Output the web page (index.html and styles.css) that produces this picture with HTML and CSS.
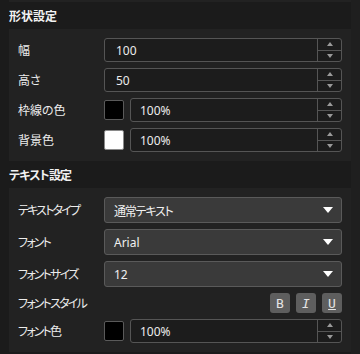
FILE: index.html
```html
<!DOCTYPE html>
<html lang="ja">
<head>
<meta charset="utf-8">
<link rel="stylesheet" href="styles.css">
</head>
<body>
<div class="panel">
  <div class="scroll">
    <div class="prev-end"></div>
    <section class="section">
      <h2 class="sec-title">形状設定</h2>
      <div class="card">
        <div class="row">
          <span class="label">幅</span>
          <div class="num">
            <span class="num-value">100</span>
            <span class="spin"><span class="spin-up"><i class="tri-up"></i></span><span class="spin-down"><i class="tri-down"></i></span></span>
          </div>
        </div>
        <div class="row">
          <span class="label">高さ</span>
          <div class="num">
            <span class="num-value">50</span>
            <span class="spin"><span class="spin-up"><i class="tri-up"></i></span><span class="spin-down"><i class="tri-down"></i></span></span>
          </div>
        </div>
        <div class="row">
          <span class="label">枠線の色</span>
          <div class="color-ctl">
            <span class="swatch swatch-black"></span>
            <div class="num num-pct">
              <span class="num-value">100%</span>
              <span class="spin"><span class="spin-up"><i class="tri-up"></i></span><span class="spin-down"><i class="tri-down"></i></span></span>
            </div>
          </div>
        </div>
        <div class="row">
          <span class="label">背景色</span>
          <div class="color-ctl">
            <span class="swatch swatch-white"></span>
            <div class="num num-pct">
              <span class="num-value">100%</span>
              <span class="spin"><span class="spin-up"><i class="tri-up"></i></span><span class="spin-down"><i class="tri-down"></i></span></span>
            </div>
          </div>
        </div>
      </div>
    </section>
    <section class="section">
      <h2 class="sec-title kana-title">テキスト設定</h2>
      <div class="card">
        <div class="row row-select">
          <span class="label kana">テキストタイプ</span>
          <div class="select"><span class="select-value kana-value">通常テキスト</span><i class="caret"></i></div>
        </div>
        <div class="row row-select">
          <span class="label kana">フォント</span>
          <div class="select"><span class="select-value latin">Arial</span><i class="caret"></i></div>
        </div>
        <div class="row row-select">
          <span class="label kana">フォントサイズ</span>
          <div class="select"><span class="select-value latin">12</span><i class="caret"></i></div>
        </div>
        <div class="row row-style">
          <span class="label kana">フォントスタイル</span>
          <div class="style-btns">
            <span class="sbtn sbtn-b">B</span>
            <span class="sbtn sbtn-i">I</span>
            <span class="sbtn sbtn-u">U</span>
          </div>
        </div>
        <div class="row">
          <span class="label kana">フォント色</span>
          <div class="color-ctl">
            <span class="swatch swatch-black"></span>
            <div class="num num-pct">
              <span class="num-value">100%</span>
              <span class="spin"><span class="spin-up"><i class="tri-up"></i></span><span class="spin-down"><i class="tri-down"></i></span></span>
            </div>
          </div>
        </div>
      </div>
    </section>
  </div>
  <div class="scrollbar"></div>
</div>
</body>
</html>
```
FILE: styles.css
```css
* { box-sizing: border-box; }
html, body { margin: 0; padding: 0; }
body {
  background: #1b1b1b;
  font-family: "Noto Sans CJK JP", "Noto Sans", sans-serif;
  font-feature-settings: "palt";
  color: #e6e6e6;
}
.panel {
  width: 360px;
  height: 354px;
  display: flex;
  overflow: hidden;
}
.scroll {
  width: 351px;
  display: flex;
  flex-direction: column;
}
.scrollbar {
  width: 9px;
  background: #1f1f1f;
}
.prev-end {
  height: 2px;
  background: #222222;
  margin-left: 9px;
}
.sec-title {
  margin: 0;
  height: 27px;
  line-height: 27px;
  padding-left: 9px;
  font-size: 12px;
  font-weight: bold;
  color: #f2f2f2;
}
.kana-title { letter-spacing: -0.8px; }
.kana { letter-spacing: -1.8px; }
.kana-value { letter-spacing: -1.2px; }
.card {
  margin-left: 9px;
  background: #222222;
  padding: 9px;
  display: flex;
  flex-direction: column;
  gap: 6px;
}
.row {
  display: grid;
  grid-template-columns: 86px 1fr;
  align-items: center;
  height: 24px;
}
.row-select { height: 26px; }
.row-style { height: 20px; }
.label {
  font-size: 12px;
  color: #ececec;
  line-height: 1;
}
.num {
  height: 24px;
  border: 1px solid #555555;
  border-radius: 3px;
  background: #1c1c1c;
  display: flex;
  align-items: stretch;
}
.num-value {
  flex: 1;
  display: flex;
  align-items: center;
  padding-left: 11px;
  font-family: "Noto Sans", sans-serif;
  font-size: 12px;
  color: #ececec;
}
.num-pct .num-value { padding-left: 9px; }
.spin {
  width: 24px;
  border-left: 1px solid #555555;
  display: flex;
  flex-direction: column;
}
.spin-up, .spin-down {
  flex: 1;
  display: flex;
  align-items: center;
  justify-content: center;
}
.spin-up { border-bottom: 1px solid #555555; }
.tri-up, .tri-down {
  width: 0;
  height: 0;
  border-left: 3.5px solid transparent;
  border-right: 3.5px solid transparent;
}
.tri-up { border-bottom: 4px solid #9a9a9a; }
.tri-down { border-top: 4px solid #9a9a9a; }
.color-ctl {
  display: flex;
  align-items: center;
  gap: 6px;
}
.color-ctl .num { flex: 1; }
.swatch {
  width: 20px;
  height: 20px;
  border-radius: 2px;
  border: 1px solid #5a5a5a;
}
.swatch-black { background: #000000; }
.swatch-white { background: #ffffff; border-color: #8a8a8a; }
.select {
  height: 26px;
  border: 1px solid #5a5a5a;
  border-radius: 3px;
  background: #3a3a3a;
  display: flex;
  align-items: center;
  padding: 0 8px 0 9px;
}
.select-value {
  flex: 1;
  font-size: 12px;
  color: #f0f0f0;
}
.select-value.latin { font-family: "Noto Sans", sans-serif; }
.caret {
  width: 0;
  height: 0;
  border-left: 5px solid transparent;
  border-right: 5px solid transparent;
  border-top: 6px solid #ffffff;
}
.style-btns {
  display: flex;
  justify-content: flex-end;
  gap: 6px;
}
.sbtn {
  width: 20px;
  height: 20px;
  border-radius: 3px;
  background: #5e5e5e;
  display: flex;
  align-items: center;
  justify-content: center;
  font-family: "DejaVu Sans Mono", monospace;
  font-size: 13px;
  color: #e4e4e4;
}
.sbtn-i { font-style: italic; }
.sbtn-u { text-decoration: underline; }
```
